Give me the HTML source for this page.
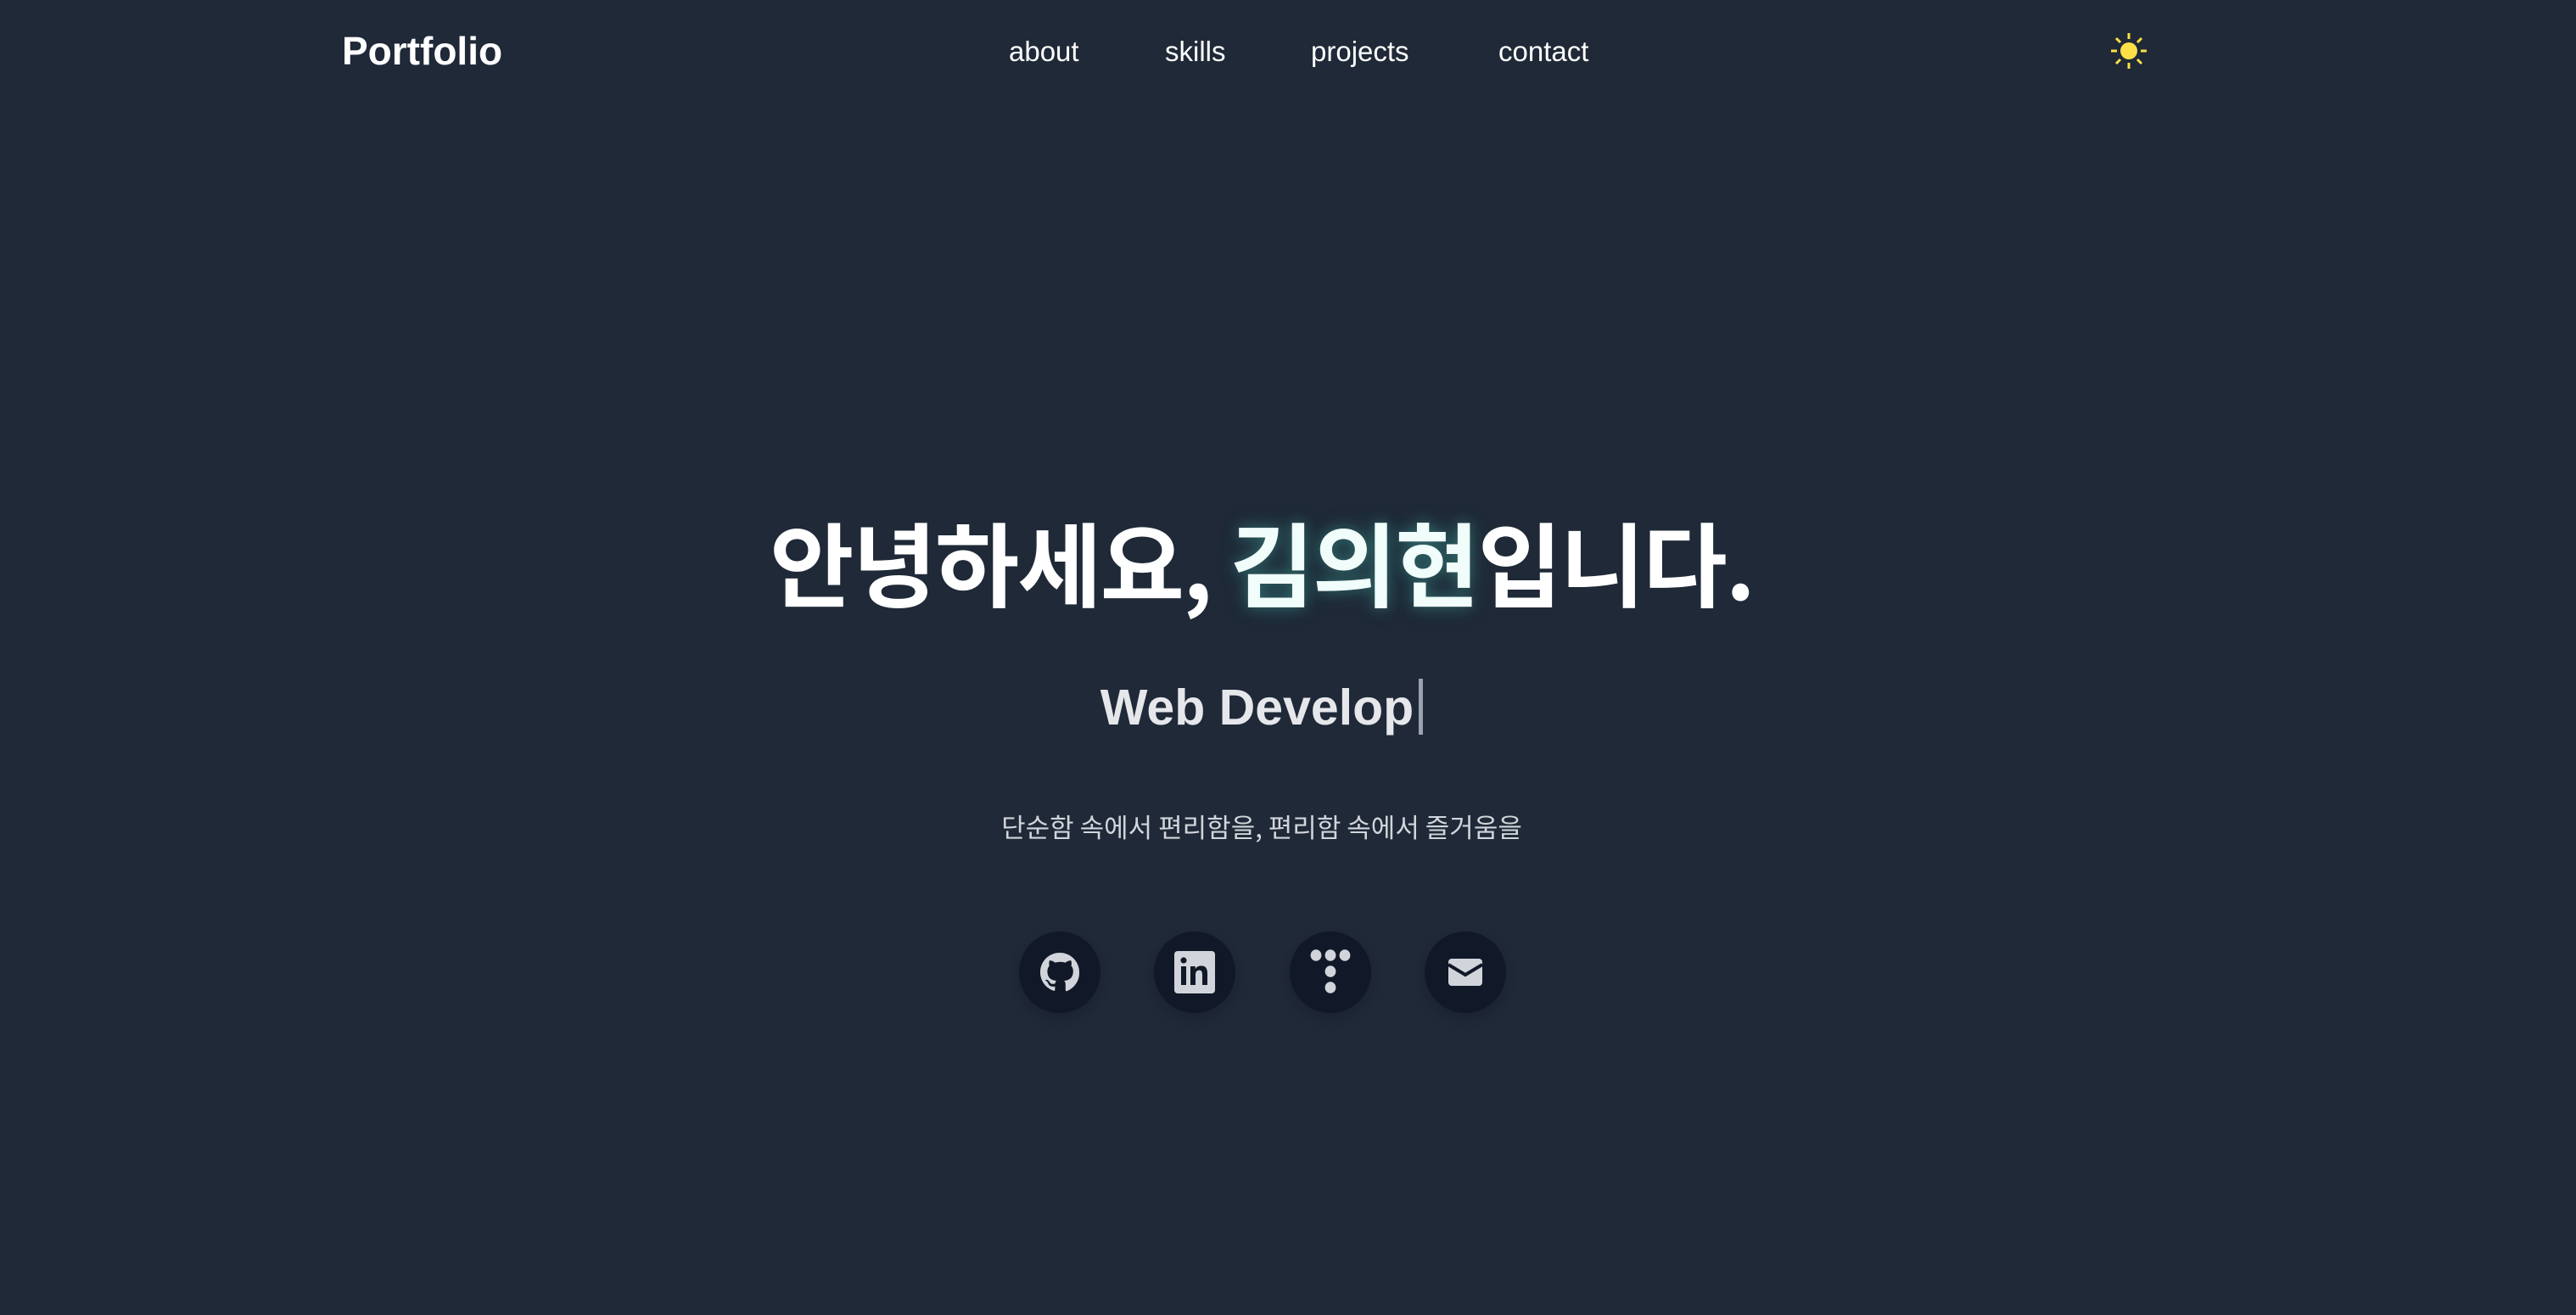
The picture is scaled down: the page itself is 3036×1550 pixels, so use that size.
<!DOCTYPE html>
<html><head><meta charset="utf-8"><style>
html,body{margin:0;padding:0;width:3036px;height:1550px;background:#1f2937;overflow:hidden;font-family:"Liberation Sans","Noto Sans CJK KR",sans-serif;color:#fff}
.abs{position:absolute;white-space:nowrap}
.logo{left:403px;top:30px;font-size:46px;font-weight:bold;line-height:60px}
.nav{top:41px;font-size:33px;line-height:40px}
.c{left:0;width:2974px;text-align:center}
h1{margin:0;position:absolute;left:0;width:2974px;text-align:center;top:596px;font-size:108px;line-height:130px;font-weight:bold;font-family:"Noto Sans CJK KR",sans-serif;letter-spacing:-2px}
.glow{color:#f0fdfa;text-shadow:0 0 16px rgba(94,234,212,.3),0 0 30px rgba(45,212,191,.15)}
.wd{top:794px;font-size:59px;line-height:80px;font-weight:bold;color:#e5e7eb}
.cur{display:inline-block;width:5px;height:66px;background:#9ca3af;vertical-align:-12px;margin-left:6px}
.sub{top:952px;font-size:31px;line-height:44px;color:#d1d5db;font-family:"Noto Sans CJK KR",sans-serif}
.ic{position:absolute;top:1098px;width:96px;height:96px;border-radius:50%;background:#111827;box-shadow:0 6px 14px rgba(0,0,0,.15);display:flex;align-items:center;justify-content:center}
</style></head><body>
<div class="abs logo">Portfolio</div>
<div class="abs nav" style="left:1189px">about</div>
<div class="abs nav" style="left:1373px">skills</div>
<div class="abs nav" style="left:1545px">projects</div>
<div class="abs nav" style="left:1766px">contact</div>
<svg class="abs" style="left:2469px;top:20px" width="80" height="80" viewBox="-40 -40 80 80">
<circle r="10" fill="#fde047"/>
<g stroke="#fde047" stroke-width="3" stroke-linecap="butt">
<line x1="0" y1="-14" x2="0" y2="-21"/><line x1="0" y1="14" x2="0" y2="21"/>
<line x1="-14" y1="0" x2="-21" y2="0"/><line x1="14" y1="0" x2="21" y2="0"/>
<line x1="10" y1="-10" x2="15" y2="-15"/><line x1="-10" y1="-10" x2="-15" y2="-15"/>
<line x1="10" y1="10" x2="15" y2="15"/><line x1="-10" y1="10" x2="-15" y2="15"/>
</g></svg>
<h1>안녕하세요, <span class="glow">김의현</span>입니다.</h1>
<div class="abs c wd">Web Develop<span class="cur"></span></div>
<div class="abs c sub">단순함 속에서 편리함을, 편리함 속에서 즐거움을</div>
<div class="ic" style="left:1201px"><svg width="48" height="48" viewBox="0 0 24 24"><path fill="#d1d5db" d="M12 .5C5.6.5.5 5.6.5 12c0 5.1 3.3 9.4 7.9 10.9.6.1.8-.2.8-.6v-2c-3.2.7-3.900-1.500-3.900-1.500-.5-1.3-1.3-1.7-1.3-1.7-1-.7.1-.7.1-.7 1.2.1 1.8 1.2 1.8 1.2 1 1.8 2.7 1.3 3.4 1 .1-.8.4-1.3.7-1.6-2.6-.3-5.3-1.3-5.3-5.7 0-1.3.5-2.3 1.2-3.1-.1-.3-.5-1.5.1-3.1 0 0 1-.3 3.3 1.2a11.5 11.5 0 016 0c2.3-1.5 3.3-1.2 3.3-1.2.7 1.6.2 2.8.1 3.1.8.8 1.2 1.8 1.2 3.1 0 4.4-2.7 5.4-5.3 5.7.4.4.8 1.1.8 2.2v3.3c0 .3.2.7.8.6A11.5 11.5 0 0023.5 12C23.5 5.6 18.4.5 12 .5z"/></svg></div>
<div class="ic" style="left:1360px"><svg width="48" height="50" viewBox="0 0 24 25"><rect x="0" y="0" width="24" height="25" rx="2" fill="#d1d5db"/><circle cx="5.5" cy="5.5" r="1.8" fill="#111827"/><rect x="4" y="9" width="3" height="11" fill="#111827"/><path fill="#111827" d="M9.5 9h2.9v1.6c.5-.9 1.6-1.9 3.4-1.9 3 0 3.7 2 3.7 4.6V20h-3v-5.8c0-1.4-.1-2.9-1.8-2.9s-2.2 1.3-2.2 2.8V20h-3z"/></svg></div>
<div class="ic" style="left:1520px"><svg width="50" height="54" viewBox="0 0 24 27" fill="#d1d5db"><ellipse cx="3.5" cy="3.5" rx="3.2" ry="3.4"/><ellipse cx="12" cy="3.5" rx="3.2" ry="3.4"/><ellipse cx="20.5" cy="3.5" rx="3.2" ry="3.4"/><ellipse cx="12" cy="13" rx="3.2" ry="3.4"/><ellipse cx="12" cy="22.5" rx="3.2" ry="3.4"/></svg></div>
<div class="ic" style="left:1679px"><svg width="40" height="32" viewBox="0 0 20 16"><rect x="0" y="0" width="20" height="16" rx="2" fill="#d1d5db"/><path d="M0 3.5L10 9.5L20 3.5" stroke="#111827" stroke-width="2" fill="none"/></svg></div>
</body></html>
